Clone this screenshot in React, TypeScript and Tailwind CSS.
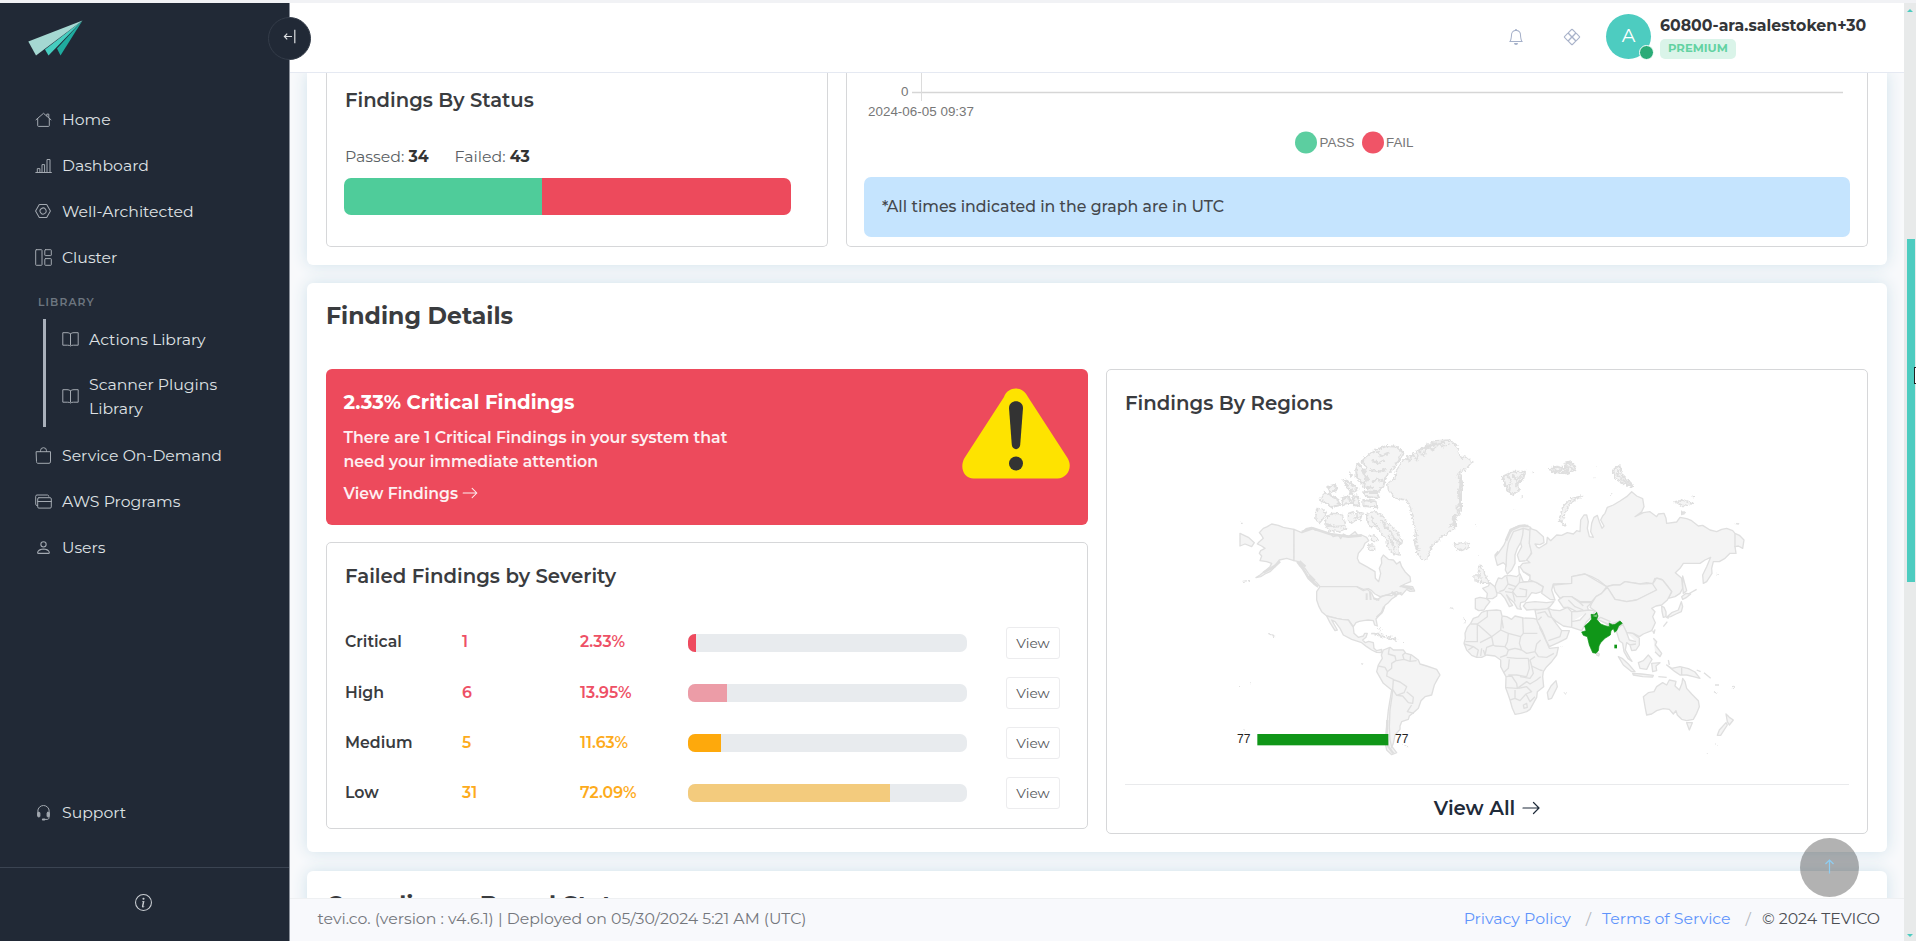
import type { ReactNode } from "react";
import { BsBell, BsInfoCircle, BsNut, BsPerson } from "react-icons/bs";

function Line({ children, size = 17, className = "" }: { children: ReactNode; size?: number; className?: string }) {
  return (
    <svg
      width={size}
      height={size}
      viewBox="0 0 17 17"
      fill="none"
      stroke="currentColor"
      strokeWidth="1"
      strokeLinecap="round"
      strokeLinejoin="round"
      className={className}
    >
      {children}
    </svg>
  );
}

const HomeIcon = () => (
  <Line>
    <path d="M1 8.800 8.500 2.300 16 8.800M2.700 7.500v7.200c0 .4.3.7.7.7h10.200c.4 0 .7-.3.7-.7V7.500M11.800 4.900V3.100h2v3.600" />
  </Line>
);
const BarsIcon = () => (
  <Line>
    <path d="M.8 15.500h15.600M2.300 15.500V11.600h2.600V15.500M7 15.500V7.600h2.600V15.500M12 15.500V2.500h3v13" />
  </Line>
);
const ClusterIcon = () => (
  <Line>
    <rect x=".7" y=".7" width="6.300" height="15.600" rx=".6" />
    <rect x="9.800" y=".7" width="6.500" height="5.900" rx=".6" />
    <rect x="9.800" y="9.600" width="6.500" height="6.700" rx=".6" />
  </Line>
);
const BookIcon = () => (
  <Line>
    <path d="M8.500 3C7.600 2 6.600 1.700 5 1.700H.8v12.500h4.600c1.500 0 2.400.1 3.100.8 .7-.7 1.600-.8 3.100-.8h4.600V1.700H12c-1.600 0-2.600.3-3.500 1.300zM8.500 3v11" />
  </Line>
);
const BagIcon = () => (
  <Line>
    <path d="M1.500 4.700h14v10.200c0 .8-.6 1.400-1.400 1.400H2.900c-.8 0-1.400-.6-1.400-1.400zM5.500 4.500v-.8a3 3 0 0 1 6 0v.8" />
  </Line>
);
const ProgramsIcon = () => (
  <Line>
    <path d="M2.500 12.500H2c-.8 0-1.300-.5-1.300-1.300V3.300C.7 2.500 1.200 2 2 2h10.500c.8 0 1.300.5 1.300 1.300M2.700 8.500h13.600" />
    <rect x="2.700" y="4.700" width="13.600" height="10.400" rx="1.200" />
  </Line>
);
const HeadsetIcon = () => (
  <Line>
    <path d="M2.800 11V7.200a5.700 5.700 0 0 1 11.400 0V11M14 12v1.700c0 1-.8 1.700-1.800 1.700H9.500" />
    <rect x="2.700" y="8.300" width="2.200" height="4.600" rx=".8" fill="currentColor" />
    <rect x="12.100" y="8.300" width="2.200" height="4.600" rx=".8" fill="currentColor" />
    <path d="M7.800 15.500h1.600" strokeWidth="1.800" />
  </Line>
);

function NavItem({ icon, label }: { icon: ReactNode; label: string }) {
  return (
    <div className="flex h-[46px] items-center">
      <span className="flex w-[62px] justify-center pb-[2px] pl-[24px] text-[#a3a9b1]">{icon}</span>
      <span>{label}</span>
    </div>
  );
}

function Sidebar() {
  return (
    <aside className="flex w-[290px] shrink-0 flex-col border-r border-[#8a909a] bg-[#212936] text-[15.7px] leading-[24px] text-[#dfe1e4]">
      <div className="h-[94px] pt-[17px] pl-[28px]">
        <svg width="55" height="37" viewBox="0 0 55 37">
          <path d="M54.500 .5 29 28.500 32.500 35.500z" fill="#1fab9f" />
          <path d="M54.500 .5 17 29.500 20.500 35.500z" fill="#46cdbf" />
          <path d="M54.500 .5.3 21.500 8 35.500z" fill="#a5d8d2" />
        </svg>
      </div>
      <NavItem icon={<HomeIcon />} label="Home" />
      <NavItem icon={<BarsIcon />} label="Dashboard" />
      <NavItem icon={<BsNut size={16} />} label="Well-Architected" />
      <NavItem icon={<ClusterIcon />} label="Cluster" />
      <div className="mt-[10px] pl-[38px] text-[10.8px] font-semibold tracking-[1.1px] text-[#6d7680]">LIBRARY</div>
      <div className="mt-[4px] mb-[6px] ml-[43px] flex flex-col gap-[21px] border-l-[3px] border-[#a9b0bb] pt-[9px] pb-[6px]">
        <div className="flex items-center">
          <span className="flex w-[43px] justify-center pb-[2px] pl-[6px] text-[#a3a9b1]"><BookIcon /></span>
          <span>Actions Library</span>
        </div>
        <div className="flex items-center">
          <span className="flex w-[43px] justify-center pb-[1px] pl-[6px] text-[#a3a9b1]"><BookIcon /></span>
          <span className="w-[150px]">Scanner Plugins Library</span>
        </div>
      </div>
      <NavItem icon={<BagIcon />} label="Service On-Demand" />
      <NavItem icon={<ProgramsIcon />} label="AWS Programs" />
      <NavItem icon={<BsPerson size={17} />} label="Users" />
      <div className="mt-auto">
        <NavItem icon={<HeadsetIcon />} label="Support" />
      </div>
      <div className="mt-[31px] flex h-[74px] items-center justify-center border-t border-[#3b4452] pr-[2px] pb-[4px] text-[#c9cdd2]">
        <BsInfoCircle size={17} />
      </div>
    </aside>
  );
}

function Header() {
  return (
    <header className="flex h-[70px] shrink-0 items-center justify-end border-b border-[#e5e9f2] bg-white pr-[36px] pb-[2px]">
      <BsBell size={16} className="text-[#a5b0c9]" />
      <svg width="18" height="18" viewBox="0 0 18 18" fill="none" stroke="#a9b3ca" strokeWidth="1.100" className="mx-[39px]">
        <g transform="rotate(45 9 9)">
          <rect x="3.400" y="3.400" width="5.600" height="5.600" rx=".6" />
          <rect x="9" y="3.400" width="5.600" height="5.600" rx=".6" />
          <rect x="3.400" y="9" width="5.600" height="5.600" rx=".6" />
          <rect x="9" y="9" width="5.600" height="5.600" rx=".6" />
        </g>
      </svg>
      <div className="relative mr-[9px] ml-[-14px] flex size-[45px] items-center justify-center rounded-full bg-[#4dccc0] text-[19px] text-white">
        A
        <span className="absolute right-[-3px] bottom-[-1px] size-[15px] rounded-full border border-white bg-[#2aab77]" />
      </div>
      <div className="flex w-[208px] flex-col items-start">
        <span className="mt-[1px] text-[15.75px] leading-[22px] font-bold text-[#333538]">60800-ara.salestoken+30</span>
        <span className="mt-[2px] flex h-[20px] items-center rounded-[5px] bg-[#daf4e9] px-[8px] text-[11.6px] font-bold text-[#62d2a2]">
          PREMIUM
        </span>
      </div>
    </header>
  );
}

function StatusSection() {
  return (
    <section className="flex h-[192px] shrink-0 gap-[18px] rounded-b-[6px] bg-white pl-[19px] shadow-[0_0_16px_#cfe2eb]">
      <div className="h-[174px] w-[502px] rounded-b-[5px] border border-t-0 border-[#d6d7d9] px-[18px] pt-[12px]">
        <h3 className="text-[19.6px] leading-[30px] font-semibold text-[#3a3c3f]">Findings By Status</h3>
        <div className="mt-[30px] flex gap-[26px] text-[15.75px] leading-[24px] text-[#5b5f64]">
          <span>Passed: <b className="font-bold text-[#333]">34</b></span>
          <span>Failed: <b className="font-bold text-[#333]">43</b></span>
        </div>
        <div className="mt-[9px] ml-[-1px] flex h-[37px] w-[447px] overflow-hidden rounded-[7px]">
          <div className="w-[198px] bg-[#4fcc9a]" />
          <div className="flex-1 bg-[#ed4a5c]" />
        </div>
      </div>
      <div className="h-[174px] w-[1022px] rounded-b-[5px] border border-t-0 border-[#d6d7d9]">
        <svg width="1020" height="104" viewBox="0 0 1020 104" fontFamily="Liberation Sans, Arial, sans-serif" fontSize="13.400" fill="#777" className="block">
          <path d="M65 19.500H996" stroke="#d6d6d6" strokeWidth="1.500" />
          <path d="M74.500 0V28" stroke="#dcdcdc" />
          <text x="54" y="23">0</text>
          <text x="21" y="43" textLength="106">2024-06-05 09:37</text>
          <circle cx="459" cy="69.500" r="11" fill="#5ccea0" />
          <text x="472.500" y="73.500" textLength="35">PASS</text>
          <circle cx="526" cy="69.500" r="11" fill="#f05467" />
          <text x="539" y="73.500" textLength="27.500">FAIL</text>
        </svg>
        <div className="ml-[17px] flex h-[60px] w-[986px] items-center rounded-[7px] bg-[#c5e4fe] pl-[18px] text-[15.75px] font-medium text-[#44484d]">
          *All times indicated in the graph are in UTC
        </div>
      </div>
    </section>
  );
}

const severities = [
  { name: "Critical", count: 1, pct: "2.33%", width: 8, text: "text-[#ee5065]", bar: "bg-[#ee4a5e]" },
  { name: "High", count: 6, pct: "13.95%", width: 39, text: "text-[#ee5065]", bar: "bg-[#ec9ca7]" },
  { name: "Medium", count: 5, pct: "11.63%", width: 33, text: "text-[#fdab1c]", bar: "bg-[#fea90c]" },
  { name: "Low", count: 31, pct: "72.09%", width: 202, text: "text-[#fdab1c]", bar: "bg-[#f3cb7d]" },
];

function Arrow({ width, height }: { width: number; height: number }) {
  return (
    <svg width={width} height={height} viewBox="0 0 18 14" fill="none" stroke="currentColor" strokeWidth="1.200" strokeLinecap="round" strokeLinejoin="round">
      <path d="M1 7h16M11.500 1.500 17 7l-5.500 5.500" />
    </svg>
  );
}

function CriticalBanner() {
  return (
    <div className="flex h-[156px] justify-between rounded-[6px] bg-[#ed4a5c] pt-[18px] pr-[18px] pl-[17.5px] text-white">
      <div className="w-[425px]">
        <h3 className="text-[19.7px] leading-[30px] font-bold">2.33% Critical Findings</h3>
        <p className="mt-[9px] text-[15.75px] leading-[24px] font-semibold text-[#fdeff1]">
          There are 1 Critical Findings in your system that need your immediate attention
        </p>
        <a className="mt-[8px] flex items-center gap-[4px] text-[15.7px] leading-[24px] font-semibold text-[#fdeff1]">
          View Findings <span className="pb-[3px]"><Arrow width={16} height={12} /></span>
        </a>
      </div>
      <svg width="108" height="91" viewBox="0 0 108 91" className="mt-px">
        <path d="M42 9C46-2.500 61-2.500 66 9l39.500 61c6 10-1 20.500-10 20.500h-84C2.500 90.500-3 80 2.500 70z" fill="#fee300" />
        <path d="M47 20c0-9 14-9 14 0l-2.800 37c-.7 5.500-7.700 5.500-8.400 0z" fill="#333" />
        <circle cx="54" cy="75.500" r="7" fill="#333" />
      </svg>
    </div>
  );
}

function SeverityCard() {
  return (
    <div className="h-[287px] rounded-[5px] border border-[#d6d7d9] pt-[18px] pl-[18px]">
      <h3 className="text-[19.7px] leading-[30px] font-semibold text-[#3a3c3f]">Failed Findings by Severity</h3>
      <div className="mt-[27px] text-[15.75px]">
        {severities.map((s) => (
          <div key={s.name} className="group flex h-[50px] items-center">
            <span className="w-[117px] pb-[1px] font-semibold text-[#3a3c3f] group-first:pb-[3px]">{s.name}</span>
            <span className={`w-[118px] pb-[1px] font-semibold group-first:pb-[3px] ${s.text}`}>{s.count}</span>
            <span className={`w-[108px] pb-[1px] font-semibold group-first:pb-[3px] ${s.text}`}>{s.pct}</span>
            <div className="h-[18px] w-[279px] overflow-hidden rounded-[7px] bg-[#e8ebee]">
              <div className={`h-full ${s.bar}`} style={{ width: s.width }} />
            </div>
            <button className="ml-[39px] h-[32px] w-[54px] rounded-[3px] border border-[#ececee] text-[13.8px] text-[#55585c]">View</button>
          </div>
        ))}
      </div>
    </div>
  );
}

function WorldMap() {
  return (
    <svg width="540" height="340" viewBox="0 0 1620 1020" className="ml-[113px] block">
      <defs>
        <filter id="coast" x="-5%" y="-5%" width="110%" height="110%">
          <feTurbulence type="fractalNoise" baseFrequency="0.120" numOctaves="2" seed="4" />
          <feDisplacementMap in="SourceGraphic" scale="14" xChannelSelector="R" yChannelSelector="G" />
        </filter>
      </defs>
      <g fill="#f4f4f4" stroke="#dfdfdf" strokeWidth="4" strokeLinejoin="round">
        {/* Arctic archipelago and small islands */}
        <g filter="url(#coast)">
          <path d="M600 88 625 72 650 62 690 60 710 78 715 95 725 115 735 108 757 125 735 150 722 160 728 200 718 230 722 260 705 290 710 315 690 335 665 350 650 368 635 378 628 400 620 422 605 418 590 395 582 360 588 330 578 300 572 265 560 240 525 235 505 210 503 190 525 175 530 150 550 120 580 100z" />
          <path d="M560 108 568 125 578 102 590 122 598 92 612 108 620 80 640 92 655 68 668 80 690 72M722 150 712 170 727 190 714 215 724 245 708 262 718 285 695 290 708 312 688 318M585 330 592 350 586 375 600 395" fill="none" strokeWidth="5" />
          <path d="M615 85 640 72 675 68M722 165 722 275M700 290 703 320" fill="none" strokeWidth="8" />
          <g strokeWidth="6">
            <path d="M440 110 465 90 500 78 530 80 550 98 535 125 515 150 495 175 490 200 475 215 450 215 430 195 445 175 430 160 440 140 425 125zM415 130 430 150 440 185 425 190 410 170 408 145zM430 215 470 218 478 235 440 230zM430 240 470 245 472 262 430 258z" />
            <path d="M455 120 475 130 495 120M450 150 480 155 500 145M455 185 475 178 490 185M470 95 485 108 510 95M440 200 460 205" fill="none" />
            <path d="M300 240 315 218 330 225 350 235 360 255 335 262 320 250zM325 200 345 195 350 210 330 218zM370 180 385 185 412 205 405 215 385 205zM365 235 385 228 395 250 370 255zM400 228 415 232 418 258 400 255zM390 160 396 165 392 170zM390 215 398 218 394 224z" />
            <path d="M848 170 880 155 915 155 910 175 888 195 900 210 875 225 860 205zM990 148 1010 140 1030 145 1045 122 1060 135 1068 148 1040 160 1015 158 992 152zM1180 150 1198 135 1205 165 1220 180 1240 200 1210 190 1185 175z" />
            <path d="M862 165 872 185 868 210M880 165 890 182 905 165M1000 145 1012 155 1028 148 1042 155 1050 132M1030 145 1045 140 1062 148M1195 150 1192 165 1212 182 1225 192" fill="none" />
          </g>
          <path d="M290 265 310 268 318 285 300 308 287 300zM320 290 340 280 365 282 372 300 380 325 355 335 325 330 315 310zM385 280 400 275 408 300 395 310 385 300zM410 275 428 280 420 300 412 295z" />
          <path d="M440 280 465 275 490 290 505 310 530 335 548 365 535 375 538 405 520 400 505 385 500 360 485 340 470 320 450 320 440 300zM445 375 462 375 465 390 450 392zM450 345 470 350 475 362 455 362z" />
          <path d="M455 290 460 310 470 315M485 298 495 320 512 335 522 355 540 370M505 345 515 365 525 390M320 315 345 320 375 318" fill="none" strokeWidth="6" />
          <path d="M1085 228 1050 250 1030 290 1025 310 1035 318 1018 300 1028 260 1055 235zM1365 245 1390 240 1420 250 1390 260zM1385 272 1395 280 1385 284z" />
          <path d="M703 372 720 368 745 370 748 382 725 392 708 385zM780 435 790 450 800 475 808 490 785 490 782 470 775 450zM762 465 778 465 775 483 762 482z" />
          <path d="M455 640 480 640 500 652 485 650zM505 650 525 655 530 660 508 658zM475 625 485 632" />
          <path d="M60 310 68 310M68 484 88 482M90 420 92 420M145 640 165 650M686 562 700 565M732 590 736 610M55 800 60 800M90 788 92 788M425 733 428 733M768 314 770 314M775 405 777 405M550 978 566 980M72 930 74 930M549 670 552 670" />
          <path d="M905 230 910 232M882 266 886 266M935 158 942 156M1120 173 1123 173M1130 140 1134 140M1170 222 1174 222M1418 230 1422 230M1545 310 1555 312M1490 462 1496 464M1030 820 1040 818M1025 680 1029 680M1488 795 1494 795M1482 815 1492 820M1536 805 1544 798M1488 972 1490 972M1459 998 1461 998" />
        </g>
        {/* North America */}
        <path d="M60 340 85 352 103 368 95 380 75 372 60 378z" />
        <path d="M222 328 190 322 175 316 155 312 142 320 130 325 118 338 124 345 130 355 118 365 112 372 125 378 135 385 122 392 118 400 125 408 120 422 140 425 155 430 150 440 135 453 120 465 108 473 122 470 135 462 150 455 165 440 172 428 178 420 200 415 222 422z" />
        <path d="M222 328 245 338 258 326 275 322 285 330 300 332 312 336 330 340 340 350 355 345 362 356 370 342 385 350 405 335 415 348 425 345 440 352 446 362 435 370 430 382 415 400 412 415 418 428 440 440 465 455 466 475 476 485 482 460 478 445 485 430 484 415 490 405 505 418 520 420 530 432 540 425 545 440 555 455 570 470 572 485 555 492 540 500 560 498 578 500 584 513 570 514 560 508 545 525 530 515 500 525 480 530 465 522 455 512 445 506 430 508 410 500 300 500 290 488 278 478 265 460 255 445 240 438 232 424 222 422z" />
        <path d="M232 425 248 445 256 458 266 475 282 490 295 500M238 424 256 440M268 466 284 482M130 458 165 438 180 424M245 336 278 325 330 342 385 350 425 346M546 498 578 508" fill="none" strokeWidth="8" />
        <path d="M300 500H410L430 512 442 508 455 520 462 535 470 540 485 530 500 525 515 527 525 518 530 527 515 537 505 548 495 556 488 575 478 585 468 597 472 618 464 615 460 602 445 600 430 602 418 604 408 608 400 620 385 600 365 598 350 595 320 588 305 575 297 560 290 540 290 515z" />
        <path d="M440 520 440 540M450 515 452 540M460 535 478 540M515 515 525 525 545 518M492 560 485 578 470 592" fill="none" strokeWidth="6" />
        <path d="M320 588 350 595 365 598 385 600 400 622 402 640 415 652 430 648 434 640 442 640 438 652 428 660 436 668 446 664 460 668 462 685 470 692 485 688 484 698 470 697 455 690 440 680 425 668 395 658 370 645 360 625 345 605 335 600 352 630 345 632 330 608z" />
        {/* South America */}
        <path d="M484 705 490 690 510 682 520 690 550 690 558 700 575 705 595 720 600 732 620 738 650 748 660 765 652 778 643 795 635 825 615 830 603 842 595 865 580 878 568 888 565 898 545 905 540 918 540 928 525 945 520 970 516 980 530 998 515 1004 500 990 496 970 500 920 505 870 515 810 490 790 470 755 475 735 487 715z" />
        <path d="M508 684 505 702 525 708 528 722 515 730 515 745 502 755 500 768 520 778 518 808M530 722 552 718 548 705 556 698M552 718 570 724 572 706M570 724 590 722M475 738 495 742 502 755M518 778 540 786 560 800 552 818 530 826 518 808 516 830 510 870 508 920 510 960 516 985M530 826 548 828 565 848 578 850 580 832 560 815M575 855 562 875 582 880" fill="none" />
        <path d="M502 900 500 950 505 980 520 1000" fill="none" strokeWidth="7" />
      </g>
      <g transform="translate(780 0)" fill="#f4f4f4" stroke="#dfdfdf" strokeWidth="4" strokeLinejoin="round">
        {/* Africa */}
        <path d="M5 577 20 572 50 570 62 572 66 588 80 590 95 598 105 588 130 594 160 595 172 598 178 612 180 625 190 645 198 662 208 685 235 682 230 705 215 725 200 740 190 755 188 770 191 800 172 815 170 832 160 850 150 868 140 875 122 880 105 883 97 865 90 840 85 825 77 803 78 770 70 755 62 740 62 720 45 708 20 705 5 712-10 712-25 706-40 690-48 670-44 655-45 640-38 622-28 610-20 595-5 590z" />
        <path d="M22 572 22 590-8 612M-8 612-28 612M-8 612 35 650 62 630 66 590M-8 612V665H-44M0 668 35 650 40 675 20 682 15 705M62 630 85 640 82 665 75 680 45 678 40 675M128 594 130 640 122 650 85 640M66 600 70 625M130 640 172 640M122 650 118 670 125 690 140 700 165 695 170 672 182 660M75 680 85 690 80 705 60 712M85 690 105 685 125 690M165 695 175 710 200 712 222 700M165 710 150 720 155 738 180 750 188 752M80 712 110 715 145 715M88 718 85 745 70 758M85 765 110 765 140 770 148 745 145 715M78 770 95 768 110 790 112 805 78 803M112 805 140 785 150 792 170 780 182 770M105 810 105 835 90 840M105 835 120 842 138 822 155 815 140 800 115 805M138 822 150 845 165 830M130 855 140 850 142 862 132 865z" fill="none" />
        <path d="M-35 690-20 680-5 690-10 712M5 685 2 708M-48 672-20 680M10 690 15 705M120 770 150 775 160 760 155 738" fill="none" />
        <path d="M228 782 232 800 215 835 205 838 202 818 213 798z" />
        {/* Europe */}
        <path d="M-14 536 0 532 20 536 30 545 18 560 12 570-4 572-14 566zM8 505 25 498 30 488 45 500 52 512 50 528 38 536 20 536 22 520z" />
        <path d="M48 490 55 474 65 476 75 468 90 466 110 470 120 462 130 485 165 485 190 500 185 515 168 520 155 518 145 532 135 545 122 548 120 560 124 568 112 566 102 548 88 535 80 525 90 545 98 556 88 560 75 535 62 520 50 518 45 500z" />
        <path d="M80 470 84 492 72 510 58 515M84 492 108 500 118 488 120 470M108 500 98 515 110 530 140 530M118 505 140 510 138 530M75 515 98 518 105 545M118 488 145 485 152 470M85 505 100 508M118 462 116 440 135 442 130 455 152 470" fill="none" />
        <path d="M138 548 165 545 200 548 222 545 210 560 195 570 165 568 140 570 130 558z" />
        <path d="M45 410 58 395 72 375 85 345 100 325 115 318 135 315 152 322 155 335 150 350 148 370 155 395 148 412 140 422 118 424 112 405 125 380 122 368 112 385 105 405 105 430 95 450 82 462 76 450 78 435 70 428 52 436z" />
        <path d="M78 440 80 400 85 370 100 335 130 325 128 345 122 368M130 325 148 330" fill="none" />
        <path d="M45 408 56 395M78 362 92 330 120 318 145 318" fill="none" strokeWidth="8" />
        {/* Russia */}
        <path d="M150 325 170 332 190 350 192 368 180 374 165 372 172 382 178 384 200 370 202 352 212 362 230 345 245 346 262 338 280 342 290 332 300 335 302 300 312 285 320 285 325 305 322 325 328 350 340 352 332 335 335 310 342 292 352 286 358 305 366 325 372 318 362 300 368 288 375 280 382 262 400 255 420 243 440 230 455 215 470 228 488 236 492 260 485 275 465 290 490 278 510 275 530 290 535 282 552 280 558 295 560 310 590 306 600 292 620 296 635 302 655 318 668 316 690 330 710 335 725 328 740 325 758 332 765 340 778 346 792 360 788 385 775 378 765 380 768 400 750 400 735 415 718 425 700 425 695 445 696 460 680 485 670 490 668 465 680 440 692 412 675 420 660 430 610 430 600 445 586 458 605 475 608 505 600 520 585 530 565 535 575 515 560 495 545 478 525 475 518 492 500 488 480 492 455 488 435 485 420 495 400 495 380 500 355 480 335 470 315 462 275 470 275 490 220 492 215 510 225 540 210 538 185 520 190 500 170 488 150 480 150 465 130 455 120 440 128 430 150 428 140 420 155 400 148 370z" />
        <path d="M765 340V382" fill="none" />
        {/* Asia */}
        <path d="M220 495 275 490 275 470 315 462 380 500 365 520 348 530 335 545 300 545 275 530 250 530 240 535 225 515z" />
        <path d="M235 540 250 530 275 530 300 548 335 548 322 560 326 572 290 575 265 562 250 562z" />
        <path d="M265 540 285 560 310 570M300 548 310 558" fill="none" />
        <path d="M380 500 400 495 420 495 435 485 480 492 520 490 530 510 500 525 470 540 440 545 405 538z" />
        <path d="M335 550 348 530 365 520 382 502 405 538 440 545 470 540 500 525 530 510 518 492 530 474 548 480 575 515 562 540 545 555 528 558 515 565 525 575 518 590 526 608 515 632 490 642 478 650 460 640 440 638 428 615 420 603 385 615 350 595 350 577 330 562z" />
        <path d="M205 565 218 570 240 572 262 562 275 575 275 622 250 618 230 605 215 592zM165 570 205 566 215 592 228 610 245 632 268 632 260 655 235 668 208 680 198 660 188 635 172 605z" />
        <path d="M172 580 195 575 205 590 215 592M185 590 175 600M245 632 240 650 205 662" fill="none" />
        <path d="M275 575 290 575 326 570 345 572 335 590 320 605 305 632 275 622zM275 605 300 600 318 580" />
        <path d="M352 598 385 612 390 604 362 592z" />
        <path d="M408 630 428 612 440 638 458 640 478 655 478 675 468 690 455 692 450 675 440 668 436 690 450 715 456 724 444 716 432 695 428 670 418 662zM440 638 448 660 468 665M448 675 468 672" />
        <path d="M415 710 428 716 445 732 465 755 455 755 430 735zM458 760 485 762 520 766 518 771 488 770 460 765zM475 728 490 722 505 705 516 718 508 732 500 748 480 745z" />
        <path d="M515 730 540 728 528 738 530 752 518 755zM560 735 575 745 600 740 625 746 645 756 660 775 640 770 620 765 600 765 585 755zM605 742V765M520 655 530 665 526 675 545 700 540 710 525 695M565 720 568 735M650 750 662 755M672 758 692 775M535 770 560 772" />
        <path d="M350 698 358 702 356 708 350 705zM545 558 552 562 558 575 558 590 550 592 546 575z" />
        <path d="M604 545 608 560 604 575 588 582 572 590 560 592 575 578 595 570zM605 530 618 520 632 522 620 532 608 538zM608 468 614 490 620 512 610 520 608 495zM560 592 566 595" />
        <path d="M625 522 650 508M518 632 522 640 525 628M550 620 562 605" fill="none" />
        {/* Oceania */}
        <path d="M490 830 505 818 522 815 530 800 548 788 560 795 568 780 588 784 585 798 598 810 606 790 608 775 615 785 620 805 635 822 655 842 658 860 650 880 640 898 620 902 605 898 592 885 588 872 580 882 568 868 550 866 530 872 515 882 500 885 496 865z" />
        <path d="M620 908 637 908 628 930zM738 882 748 892 760 900 748 915 742 905zM738 908 742 915 722 946 712 946 718 930z" />
        {/* India */}
        <path d="M333 583 342 584 350 577 354 588 350 598 362 612 375 617 388 620 388 610 398 614 405 613 420 603 427 610 416 618 410 632 404 637 400 626 393 632 391 645 375 655 362 668 357 678 355 692 348 700 338 698 328 675 322 650 310 646 305 636 318 632 314 618 328 606 335 597z" fill="#109618" stroke="#109618" strokeWidth="2" />
        <path d="M337 588 352 583 350 592z" fill="#7cc47f" stroke="none" />
        <path d="M403 674h8v11h-8z" fill="#109618" stroke="none" />
      </g>
      <rect x="112" y="942" width="393" height="34" fill="#109618" />
      <g fontFamily="Liberation Sans, Arial, sans-serif" fontSize="36" fill="#222">
        <text x="51" y="970">77</text>
        <text x="525" y="970">77</text>
      </g>
    </svg>
  );
}

function RegionsCard() {
  return (
    <div className="h-[465px] rounded-[5px] border border-[#d6d7d9] pt-[18px]">
      <h3 className="pl-[18px] text-[19.7px] leading-[30px] font-semibold text-[#3a3c3f]">Findings By Regions</h3>
      <div className="pt-[2px]">
        <WorldMap />
      </div>
      <div className="mx-[18px] mt-[24px] border-t border-[#e9eaec]" />
      <a className="mt-[8px] flex items-center justify-center gap-[7px] text-[19.7px] leading-[30px] font-semibold text-[#1f2b3a]">
        View All <Arrow width={18} height={14} />
      </a>
    </div>
  );
}

function Footer() {
  return (
    <footer className="flex h-[43px] shrink-0 items-center border-t border-[#eef0f2] bg-[#f8f9fc] pr-[24px] pb-[2px] pl-[27.5px] text-[15.75px] text-[#74777c]">
      <span>tevi.co. (version : v4.6.1) | Deployed on 05/30/2024 5:21 AM (UTC)</span>
      <a className="ml-auto text-[#5f94fb]">Privacy Policy</a>
      <span className="pr-[11px] pl-[15px] text-[#b4b8be]">/</span>
      <a className="text-[#5f94fb]">Terms of Service</a>
      <span className="pr-[11px] pl-[15px] text-[#b4b8be]">/</span>
      <span className="text-[#4b4e53]">© 2024 TEVICO</span>
    </footer>
  );
}

export default function App() {
  return (
    <div className="relative flex h-[941px] w-[1916px] flex-col overflow-hidden bg-white font-[Montserrat,Inter,sans-serif]">
      <div className="h-[3px] shrink-0 bg-[#f1f2f5]" />
      <div className="flex min-h-0 flex-1">
        <Sidebar />
        <div className="flex w-[1614px] flex-col">
          <Header />
          <main className="flex min-h-0 flex-1 flex-col overflow-hidden bg-[#f8f9fb] pr-[17px] pl-[17px]">
            <StatusSection />
            <section className="mt-[18px] h-[569px] shrink-0 rounded-[6px] bg-white px-[19px] pt-[15px] shadow-[0_0_16px_#cfe2eb]">
              <h2 className="h-[71px] text-[23.6px] leading-[36px] font-bold text-[#3a3c3f]">Finding Details</h2>
              <div className="flex gap-[18px]">
                <div className="flex w-[762px] flex-col gap-[17px]">
                  <CriticalBanner />
                  <SeverityCard />
                </div>
                <div className="w-[762px]">
                  <RegionsCard />
                </div>
              </div>
            </section>
            <section className="mt-[19px] h-[100px] shrink-0 rounded-t-[6px] bg-white px-[19px] pt-[16px] shadow-[0_0_16px_#cfe2eb]">
              <h2 className="text-[23.6px] leading-[36px] font-bold text-[#3a3c3f]">Compliance Based Status</h2>
            </section>
          </main>
          <Footer />
        </div>
        <div className="flex flex-1 flex-col items-center justify-between bg-[#e8eaea] pt-[6px] pb-[4px]">
          <svg width="6" height="3" viewBox="0 0 6 3"><path d="M3 0 6 3H0z" fill="#4dccc0" /></svg>
          <div className="mt-[-126px] ml-[2px] h-[343px] w-[8px] bg-[#4dccc0]" />
          <svg width="6" height="3" viewBox="0 0 6 3"><path d="M0 0h6L3 3z" fill="#4dccc0" /></svg>
        </div>
      </div>
      <button className="absolute top-[17px] left-[268px] flex size-[43px] items-center justify-center rounded-full border border-[#343c49] bg-[#212936] pr-[1px] pb-[5px] text-[#dcdee1]">
        <svg width="13" height="15" viewBox="0 0 13 15" fill="none" stroke="currentColor" strokeWidth="1.200">
          <path d="M11.800.8v13.400M9 7.500H1.500M4.200 4.600 1.400 7.500l2.800 2.900" />
        </svg>
      </button>
      <button className="absolute top-[838px] left-[1800px] flex size-[59px] items-center justify-center rounded-full bg-black/30 pb-[3px]">
        <svg width="11" height="15" viewBox="0 0 11 15" fill="none" stroke="#8ecdf2" strokeWidth="1.200">
          <path d="M5.500 14.500V1M1.500 5l4-4 4 4" />
        </svg>
      </button>
      <div className="absolute top-[367px] left-[1914px] h-[17px] w-[4px] border border-[#222] bg-white" />
    </div>
  );
}
